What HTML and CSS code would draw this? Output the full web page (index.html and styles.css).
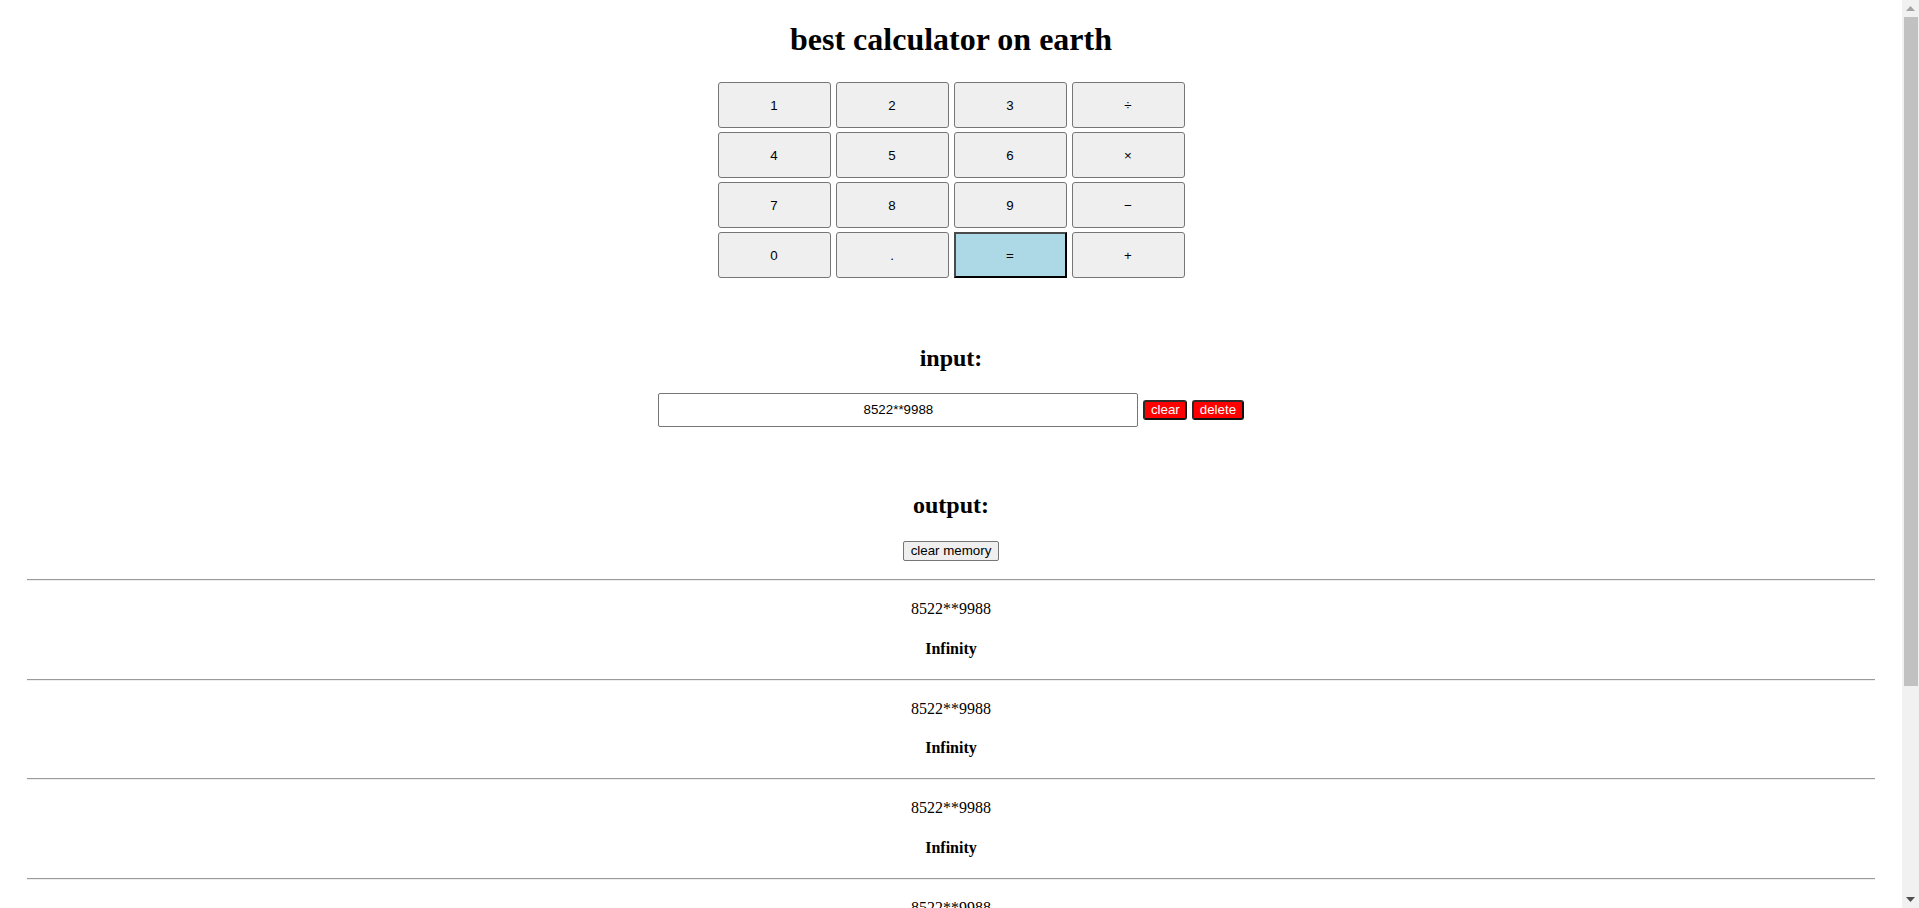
FILE: index.html
```html
<!DOCTYPE html>
<html lang="en">
<head>
<meta charset="utf-8">
<title>best calculator on earth</title>
<link rel="stylesheet" href="styles.css">
</head>
<body>
<h1 class="title">best calculator on earth</h1>
<div class="keypad">
  <button class="key">1</button>
  <button class="key">2</button>
  <button class="key">3</button>
  <button class="key">÷</button>
  <button class="key">4</button>
  <button class="key">5</button>
  <button class="key">6</button>
  <button class="key">×</button>
  <button class="key">7</button>
  <button class="key">8</button>
  <button class="key">9</button>
  <button class="key">−</button>
  <button class="key">0</button>
  <button class="key">.</button>
  <button class="key key-equals">=</button>
  <button class="key">+</button>
</div>

<h2 class="section-label input-label">input:</h2>
<div class="input-row">
  <input class="expr-field" type="text" value="8522**9988">
  <button class="danger-btn">clear</button>
  <button class="danger-btn">delete</button>
</div>

<h2 class="section-label output-label">output:</h2>
<div class="memory-row">
  <button class="plain-btn">clear memory</button>
</div>

<div class="history">
  <div class="entry">
    <hr class="entry-rule">
    <p class="entry-expr">8522**9988</p>
    <p class="entry-result">Infinity</p>
  </div>
  <div class="entry">
    <hr class="entry-rule">
    <p class="entry-expr">8522**9988</p>
    <p class="entry-result">Infinity</p>
  </div>
  <div class="entry">
    <hr class="entry-rule">
    <p class="entry-expr">8522**9988</p>
    <p class="entry-result">Infinity</p>
  </div>
  <div class="entry">
    <hr class="entry-rule">
    <p class="entry-expr">8522**9988</p>
    <p class="entry-result">Infinity</p>
  </div>
  <div class="entry">
    <hr class="entry-rule">
    <p class="entry-expr">8522**9988</p>
    <p class="entry-result">Infinity</p>
  </div>
  <div class="entry">
    <hr class="entry-rule">
    <p class="entry-expr">8522**9988</p>
    <p class="entry-result">Infinity</p>
  </div>
</div>

<div class="scrollbar" aria-hidden="true">
  <div class="scroll-arrow scroll-up">
    <svg width="9" height="5" viewBox="0 0 9 5"><path d="M0 5 L4.5 0 L9 5 Z" fill="#a3a3a3"/></svg>
  </div>
  <div class="scroll-track">
    <div class="scroll-thumb"></div>
  </div>
  <div class="scroll-arrow scroll-down">
    <svg width="9" height="5" viewBox="0 0 9 5"><path d="M0 0 L9 0 L4.5 5 Z" fill="#505050"/></svg>
  </div>
</div>
</body>
</html>
```

FILE: styles.css
```css
html {
  background: #fff;
  overflow: hidden;
  padding-right: 17px;
}

body {
  margin: 0 8px 8px;
  font-family: "Liberation Serif", "Times New Roman", serif;
  font-size: 16px;
  color: #000;
  text-align: center;
}

.title {
  font-size: 32px;
  font-weight: bold;
  line-height: normal;
  margin: 21.44px 0 0;
}

.keypad {
  display: grid;
  grid-template-columns: repeat(4, 113px);
  grid-auto-rows: 46px;
  column-gap: 5px;
  row-gap: 4px;
  justify-content: center;
  margin-top: 24px;
}

.key {
  font-family: "Liberation Sans", Arial, sans-serif;
  font-size: 13.333px;
  color: #000;
  background: #efefef;
  border: 1px solid #767676;
  border-radius: 3px;
  padding: 0;
  margin: 0;
}

.key-equals {
  background: #add8e6;
  border: 2px solid #000;
  border-top-color: #4a4a4a;
  border-left-color: #4a4a4a;
  border-radius: 0;
}

.section-label {
  font-size: 24px;
  font-weight: bold;
  line-height: normal;
  margin: 0;
}

.input-label {
  margin-top: 66.7px;
}

.input-row {
  display: flex;
  justify-content: center;
  align-items: center;
  gap: 5px;
  margin-top: 20.8px;
}

.expr-field {
  box-sizing: border-box;
  width: 480px;
  height: 34px;
  margin: 0;
  padding: 0 2px;
  border: 1px solid #767676;
  border-radius: 2px;
  font-family: "Liberation Sans", Arial, sans-serif;
  font-size: 13.333px;
  color: #000;
  text-align: center;
  background: #fff;
}

.danger-btn {
  box-sizing: border-box;
  height: 20px;
  margin: 0;
  padding: 0 5.5px;
  font-family: "Liberation Sans", Arial, sans-serif;
  font-size: 13.333px;
  color: #fff;
  background: #ff0000;
  border: 2px solid #2b2b2b;
  border-bottom-color: #111;
  border-right-color: #111;
  border-radius: 3px;
  line-height: 14px;
}

.output-label {
  margin-top: 65.5px;
}

.memory-row {
  display: flex;
  justify-content: center;
  margin-top: 21.2px;
}

.plain-btn {
  box-sizing: border-box;
  height: 20px;
  margin: 0;
  padding: 0 7px;
  font-family: "Liberation Sans", Arial, sans-serif;
  font-size: 13.333px;
  color: #000;
  background: #efefef;
  border: 1px solid #767676;
  border-radius: 2px;
  line-height: 16px;
}

.history {
  margin-top: 18.8px;
}

.entry-rule {
  width: 98%;
  height: 0;
  margin: 0 auto;
  border: 0;
  border-top: 1px solid #9a9a9a;
  border-bottom: 1px solid #eeeeee;
}

.entry-expr {
  margin: 18.8px 0 0;
  line-height: normal;
}

.entry-result {
  margin: 21.6px 0 21.1px;
  font-weight: bold;
  line-height: normal;
}

/* simulated classic scrollbar (the page scrolls in the reference) */
.scrollbar {
  position: fixed;
  top: 0;
  right: 0;
  width: 17px;
  height: 100vh;
  background: #f1f1f1;
  display: flex;
  flex-direction: column;
}

.scroll-arrow {
  height: 17px;
  flex: none;
  display: flex;
  align-items: center;
  justify-content: center;
}

.scroll-up svg {
  margin-top: -1px;
}

.scroll-track {
  flex: 1;
  padding: 0 1px 0 2px;
}

.scroll-thumb {
  height: 669px;
  background: #c1c1c1;
}
```
